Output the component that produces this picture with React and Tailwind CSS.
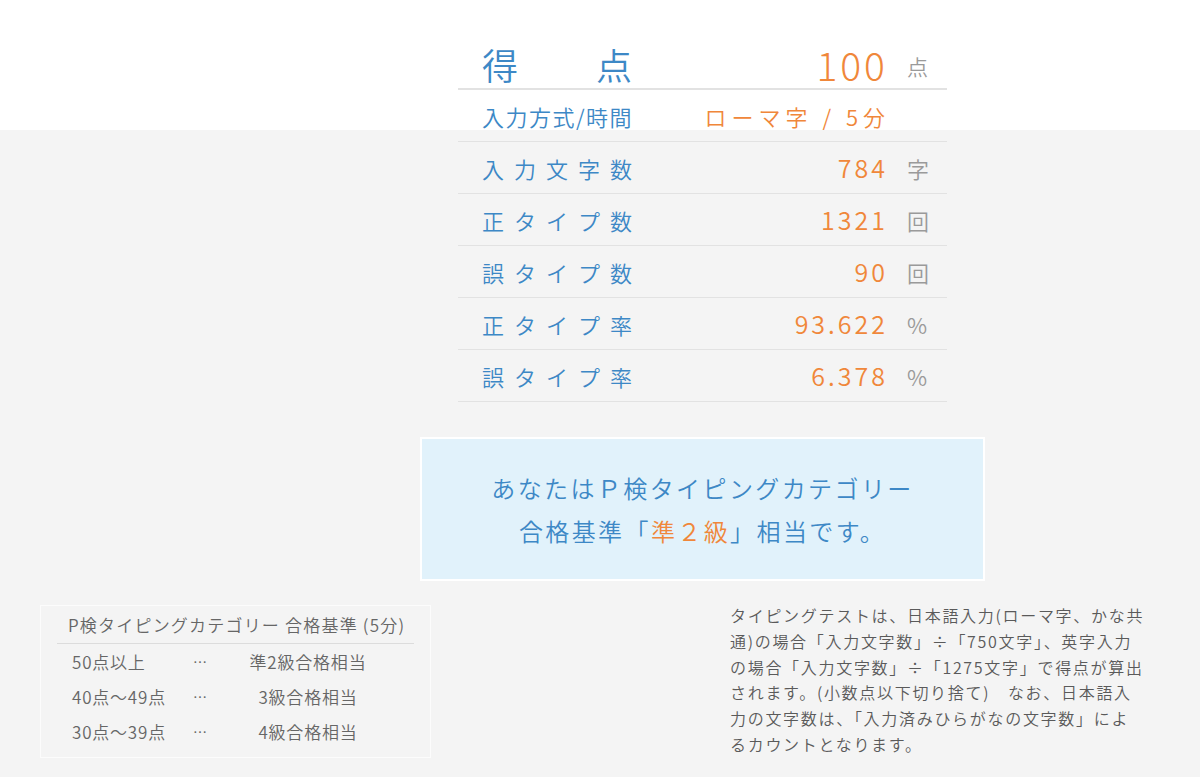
export default function App() {
  const font = { fontFamily: '"Noto Sans CJK JP", "Noto Sans", sans-serif' };
  const rows = [
    { label: "入力文字数", value: "784", unit: "字" },
    { label: "正タイプ数", value: "1321", unit: "回" },
    { label: "誤タイプ数", value: "90", unit: "回" },
    { label: "正タイプ率", value: "93.622", unit: "%" },
    { label: "誤タイプ率", value: "6.378", unit: "%" },
  ];
  return (
    <div
      className="w-[1200px] h-[777px] overflow-hidden font-[350] bg-[linear-gradient(to_bottom,#ffffff_130px,#f4f4f4_130px)]"
      style={font}
    >
      <div className="ml-[420px] w-[565px] pt-[40px]">
        <div className="px-[38px]">
          {/* score row */}
          <div className="h-[50px] flex items-center border-b-2 border-[#e2e2e2]">
            <div className="pl-[24px] w-[174px] flex justify-between text-[36px] leading-none text-[#3d88c6]">
              <span>得</span>
              <span>点</span>
            </div>
            <div className="flex-1 text-right text-[39px] leading-none font-light text-[#f0873a] tracking-[3px] mr-[-3px]">100</div>
            <div className="w-[62px] pl-[22px] text-[21px] leading-none text-[#9a9a9a] pt-[4px]">点</div>
          </div>
          {/* input method */}
          <div className="h-[52px] flex items-center border-b border-[#e2e2e2]">
            <div className="pl-[24px] text-[22px] leading-none tracking-[1.5px] text-[#3d88c6]">入力方式/時間</div>
            <div className="flex-1 text-right text-[22px] leading-none tracking-[5px] text-[#f0873a] pr-[57px]">ローマ字 / 5分</div>
          </div>
          {rows.map((r) => (
            <div key={r.label} className="h-[52px] flex items-center border-b border-[#e2e2e2]">
              <div className="pl-[24px] text-[22px] leading-none tracking-[10px] text-[#3d88c6]">{r.label}</div>
              <div className="flex-1 text-right text-[25px] leading-none tracking-[3px] text-[#f0873a] mr-[-3px]">{r.value}</div>
              <div className="w-[62px] pl-[22px] text-[22px] leading-none text-[#9a9a9a]">{r.unit}</div>
            </div>
          ))}
        </div>
        {/* result box */}
        <div className="mt-[35px] h-[144px] border-2 border-white bg-[#e1f2fb] flex flex-col items-center justify-center">
          <div className="text-[24px] leading-[43px] tracking-[2.4px] text-[#3d88c6] text-center">
            あなたはＰ検タイピングカテゴリー
          </div>
          <div className="text-[24px] leading-[43px] tracking-[2.4px] text-[#3d88c6] text-center">
            合格基準「<span className="text-[#f0873a]">準２級</span>」相当です。
          </div>
        </div>
      </div>
      {/* bottom */}
      <div className="flex mt-[24px]">
        <div className="ml-[40px] w-[391px] h-[153px] border border-[#fcfcfc] px-[16px] pt-[7px]">
          <div className="text-[17px] leading-[24px] tracking-[1.2px] text-[#666] pl-[11px]">P検タイピングカテゴリー 合格基準 (5分)</div>
          <div className="mt-[6px] border-t border-[#dcdcdc]" />
          {[
            ["50点以上", "準2級合格相当"],
            ["40点～49点", "3級合格相当"],
            ["30点～39点", "4級合格相当"],
          ].map(([a, b]) => (
            <div key={a} className="flex h-[35px] items-center text-[17px] tracking-[0.8px] text-[#666]">
              <div className="pl-[15px] w-[136px]">{a}</div>
              <div className="w-[40px] text-[14px]">…</div>
              <div className="w-[150px] text-center">{b}</div>
            </div>
          ))}
        </div>
        <div className="ml-[299px] w-[430px] text-[16px] leading-[25.8px] tracking-[1.7px] text-[#5a5a5a] -mt-[2px]">
          タイピングテストは、日本語入力(ローマ字、かな共<br />
          通)の場合「入力文字数」÷「750文字」、英字入力<br />
          の場合「入力文字数」÷「1275文字」で得点が算出<br />
          されます。(小数点以下切り捨て)　なお、日本語入<br />
          力の文字数は、「入力済みひらがなの文字数」によ<br />
          るカウントとなります。
        </div>
      </div>
    </div>
  );
}
